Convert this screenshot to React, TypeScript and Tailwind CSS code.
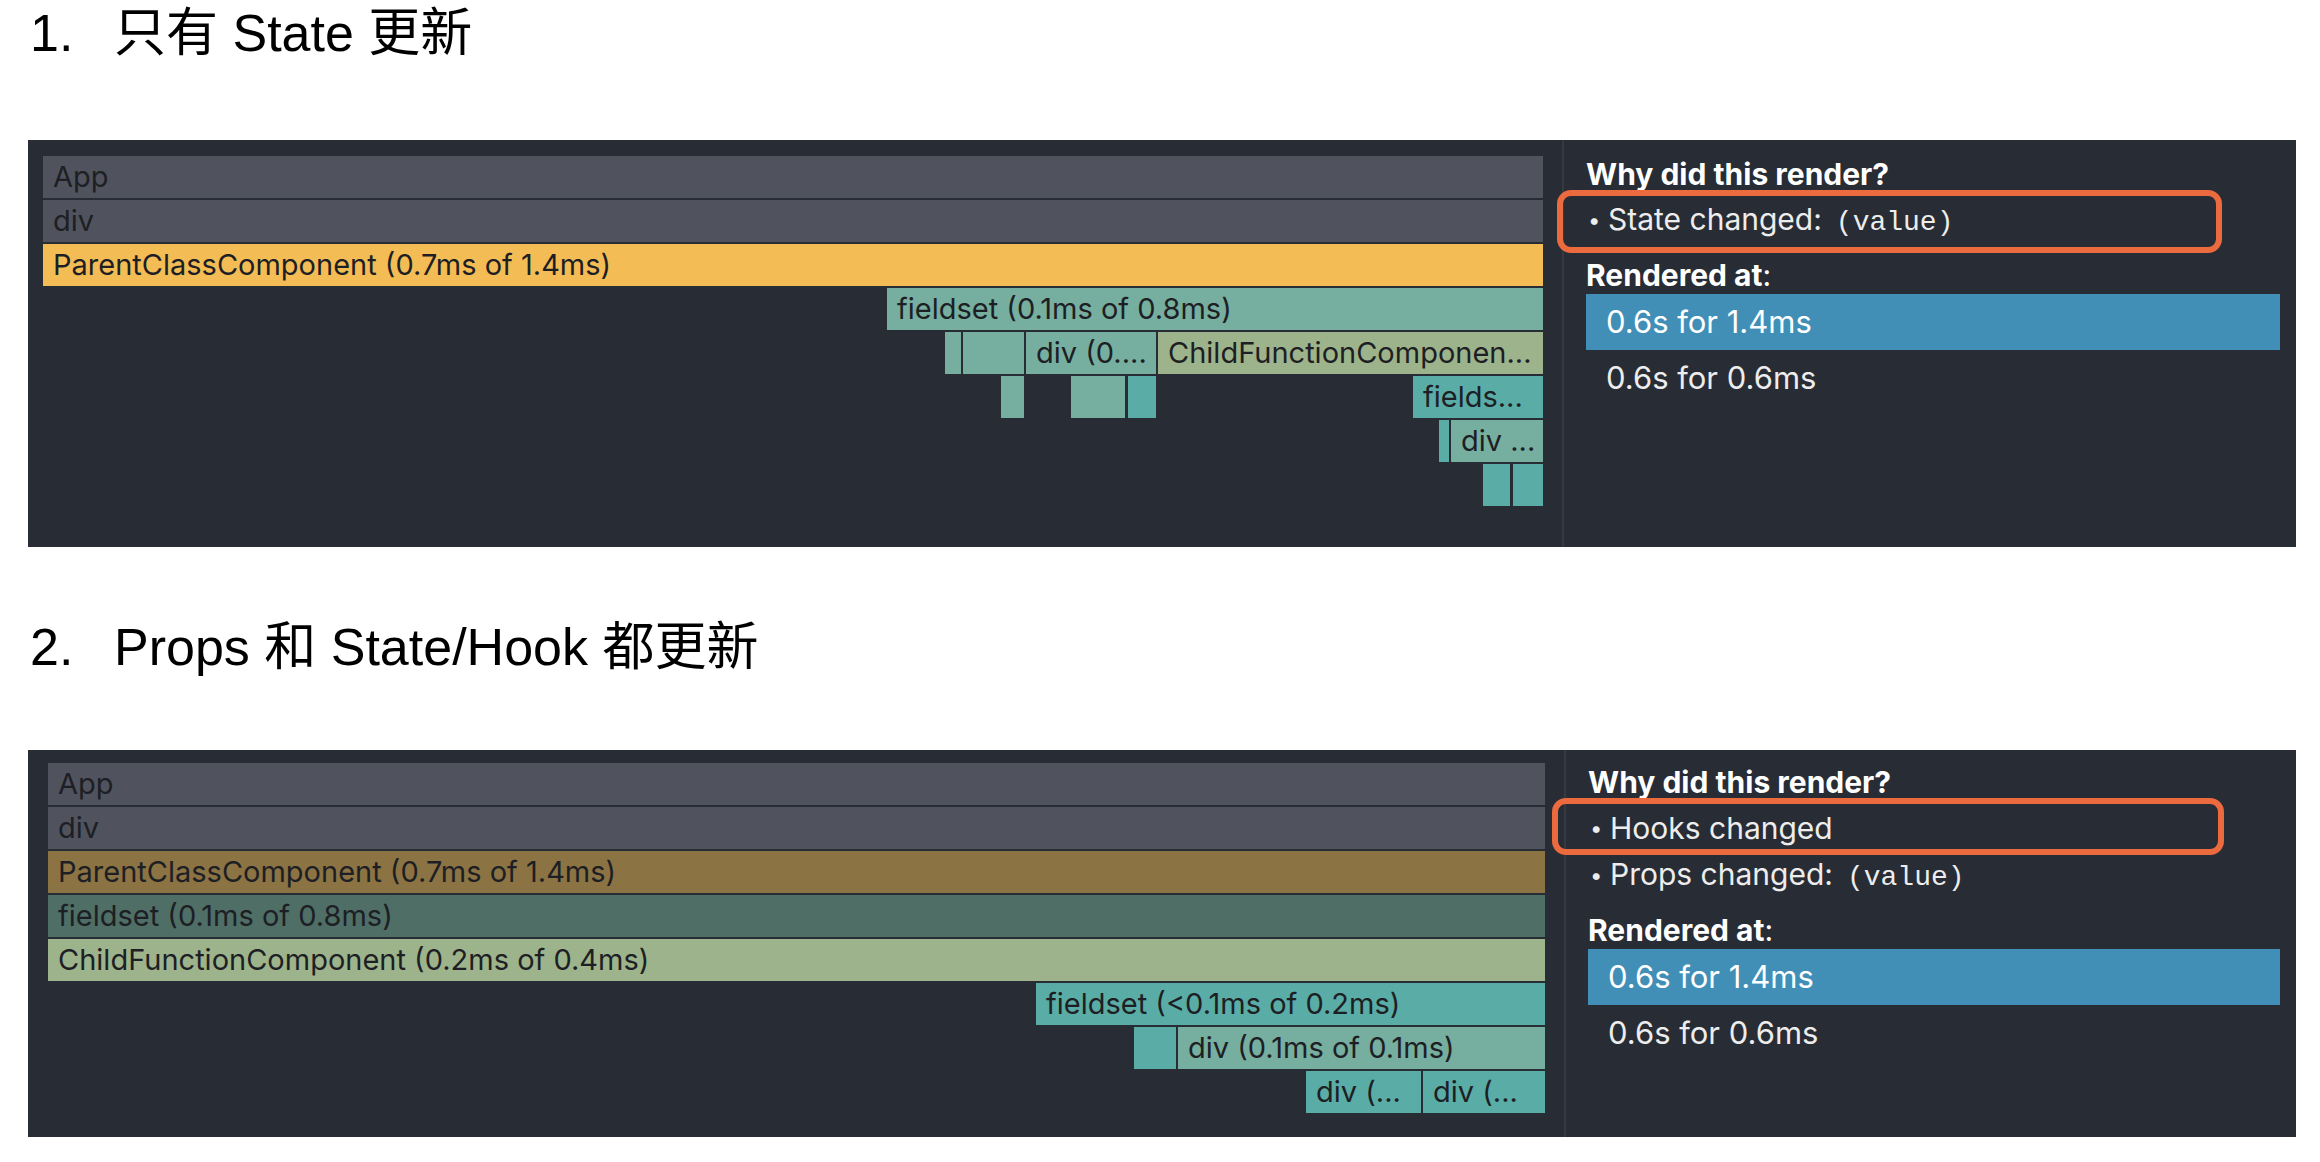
import React from "react";

type Bar = { left: number; width: number; color: string; label?: string };

const GRAY = "bg-[#50535d]";
const YELLOW = "bg-[#f4bc55]";
const SAGE = "bg-[#76ae9f]";
const CYAN = "bg-[#5aaca6]";
const OLIVE = "bg-[#9db38b]";
const BROWN = "bg-[#8b7343]";
const DEEP = "bg-[#4e6e66]";

const flameOne: Bar[][] = [
  [{ left: 0, width: 1500, color: GRAY, label: "App" }],
  [{ left: 0, width: 1500, color: GRAY, label: "div" }],
  [{ left: 0, width: 1500, color: YELLOW, label: "ParentClassComponent (0.7ms of 1.4ms)" }],
  [{ left: 844, width: 656, color: SAGE, label: "fieldset (0.1ms of 0.8ms)" }],
  [
    { left: 902, width: 16, color: SAGE },
    { left: 920, width: 61, color: SAGE },
    { left: 983, width: 130, color: SAGE, label: "div (0...." },
    { left: 1115, width: 385, color: OLIVE, label: "ChildFunctionComponen..." },
  ],
  [
    { left: 958, width: 23, color: SAGE },
    { left: 1028, width: 54, color: SAGE },
    { left: 1085, width: 28, color: CYAN },
    { left: 1370, width: 130, color: CYAN, label: "fields..." },
  ],
  [
    { left: 1396, width: 9, color: CYAN },
    { left: 1408, width: 92, color: SAGE, label: "div ..." },
  ],
  [
    { left: 1440, width: 27, color: CYAN },
    { left: 1470, width: 30, color: CYAN },
  ],
];

const flameTwo: Bar[][] = [
  [{ left: 0, width: 1497, color: GRAY, label: "App" }],
  [{ left: 0, width: 1497, color: GRAY, label: "div" }],
  [{ left: 0, width: 1497, color: BROWN, label: "ParentClassComponent (0.7ms of 1.4ms)" }],
  [{ left: 0, width: 1497, color: DEEP, label: "fieldset (0.1ms of 0.8ms)" }],
  [{ left: 0, width: 1497, color: OLIVE, label: "ChildFunctionComponent (0.2ms of 0.4ms)" }],
  [{ left: 988, width: 509, color: CYAN, label: "fieldset (<0.1ms of 0.2ms)" }],
  [
    { left: 1086, width: 42, color: CYAN },
    { left: 1130, width: 367, color: SAGE, label: "div (0.1ms of 0.1ms)" },
  ],
  [
    { left: 1258, width: 115, color: CYAN, label: "div (..." },
    { left: 1375, width: 122, color: CYAN, label: "div (..." },
  ],
];

const devFont = { fontFamily: "Inter, 'Noto Sans', sans-serif" };

function Flame({ rows }: { rows: Bar[][] }) {
  return (
    <div className="flex flex-col gap-[2px]">
      {rows.map((row, i) => (
        <div key={i} className="relative h-[42px]">
          {row.map((b, j) => (
            <div
              key={j}
              className={`absolute top-0 h-[42px] overflow-hidden whitespace-nowrap pl-[10px] text-[29px] leading-[42px] text-[#1d1f24] ${b.color}`}
              style={{ left: b.left, width: b.width }}
            >
              {b.label}
            </div>
          ))}
        </div>
      ))}
    </div>
  );
}

function Reason({
  children,
  box,
}: {
  children: React.ReactNode;
  box?: { left: number; top: number; width: number; height: number };
}) {
  return (
    <div className="relative flex h-[47px] items-center text-[30px] text-[#ededed]">
      <span className="w-[22px] pl-[2px] text-[22px]">•</span>
      <span>{children}</span>
      {box && (
        <div
          className="absolute rounded-[14px] border-[6px] border-[#eb6b3f]"
          style={box}
        />
      )}
    </div>
  );
}

function Value() {
  return (
    <span className="ml-[14px] text-[28px]" style={{ fontFamily: "'Liberation Mono', monospace" }}>
      (value)
    </span>
  );
}

function Sidebar({ children, top }: { children: React.ReactNode; top: string }) {
  return (
    <div className={`flex-1 pl-[22px] pr-[16px] ${top}`}>
      <div className="flex h-[46px] items-center text-[30px] font-bold text-white">Why did this render?</div>
      {children}
      <div className="mt-[12px] flex h-[38px] items-center text-[30px] font-bold text-white">
        Rendered at<span className="font-normal">:</span>
      </div>
      <div className="flex h-[56px] items-center bg-[#418fb7] pl-[20px] text-[31px] text-white">0.6s for 1.4ms</div>
      <div className="flex h-[56px] items-center pl-[20px] text-[31px] text-[#ededed]">0.6s for 0.6ms</div>
    </div>
  );
}

function Heading({ num, children }: { num: string; children: React.ReactNode }) {
  return (
    <h2
      className="flex h-[66px] items-center pl-[30px] text-[52px] text-black"
      style={{ fontFamily: "'Liberation Sans', 'Noto Sans CJK SC', sans-serif" }}
    >
      <span className="inline-block w-[84px]">{num}</span>
      {children}
    </h2>
  );
}

export default function App() {
  return (
    <div className="h-[1162px] w-[2320px] overflow-hidden bg-white">
      <Heading num="1.">只有 State 更新</Heading>

      <div className="ml-[28px] mt-[74px] flex h-[407px] w-[2268px] bg-[#282c34]" style={devFont}>
        <div className="w-[1536px] border-r-2 border-[#353941] pl-[15px] pr-[21px] pt-[16px]">
          <Flame rows={flameOne} />
        </div>
        <Sidebar top="pt-[11px]">
          <Reason box={{ left: -29, top: -7, width: 665, height: 63 }}>
            State changed:
            <Value />
          </Reason>
        </Sidebar>
      </div>

      <div className="mt-[67px]">
        <Heading num="2.">Props 和 State/Hook 都更新</Heading>
      </div>

      <div className="ml-[28px] mt-[70px] flex h-[387px] w-[2268px] bg-[#282c34]" style={devFont}>
        <div className="w-[1538px] border-r-2 border-[#353941] pl-[20px] pr-[21px] pt-[13px]">
          <Flame rows={flameTwo} />
        </div>
        <Sidebar top="pt-[9px]">
          <Reason box={{ left: -36, top: -7, width: 672, height: 57 }}>Hooks changed</Reason>
          <Reason>
            Props changed:
            <Value />
          </Reason>
        </Sidebar>
      </div>
    </div>
  );
}
